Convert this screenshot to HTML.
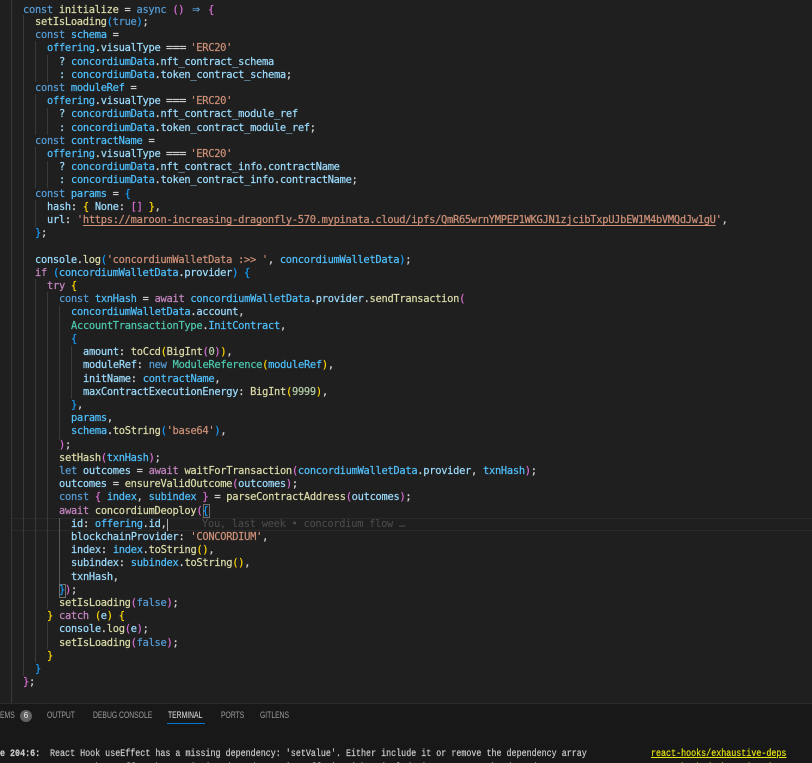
<!DOCTYPE html>
<html><head><meta charset="utf-8">
<style>
html,body{margin:0;padding:0;background:#1f1f1f;width:812px;height:763px;overflow:hidden}
#e{position:absolute;left:0;top:0;width:812px;height:703px;background:#1f1f1f;overflow:hidden}
.l{position:absolute;white-space:pre;font-family:"DejaVu Sans Mono","Liberation Mono",monospace;font-size:10.4px;line-height:13px;height:13px;color:#d4d4d4;letter-spacing:-0.286px;-webkit-text-stroke:.2px currentColor}
.g{position:absolute;width:1px;background:#3a3a3a}
.k{color:#569cd6}.c{color:#c586c0}.v{color:#4fc1ff}.f{color:#dcdcaa}.p{color:#9cdcfe}.s{color:#ce9178}.t{color:#4ec9b0}.n{color:#b5cea8}
.y{color:#ffd700}.m{color:#da70d6}.b{color:#179fff}.u{text-decoration:underline;text-underline-offset:2px}
.eq{display:inline-block;width:17.9px;transform:scaleX(1.12);transform-origin:left center;-webkit-text-stroke:.3px currentColor}
.ar{display:inline-block;width:11.95px;text-align:center;font-size:13px;letter-spacing:0;color:#569cd6}
#p{position:absolute;left:0;top:703px;width:812px;height:60px;background:#181818;border-top:1px solid #2b2b2b;box-sizing:border-box;overflow:hidden}
.tab{position:absolute;top:6px;font:9.5px/12px "Liberation Sans",sans-serif;color:#9d9d9d;white-space:pre;transform:scaleX(.715);transform-origin:left center}
.tm{position:absolute;white-space:pre;font-family:"Liberation Mono",monospace;font-size:10px;line-height:13px;color:#cccccc;transform:scaleX(.836);transform-origin:left top;-webkit-text-stroke:.2px currentColor}
</style></head><body>
<div id="e">
<div style="position:absolute;left:11px;top:518px;width:801px;height:13px;border-top:1px solid #2a2a2a;border-bottom:1px solid #2a2a2a;box-sizing:border-box"></div>
<div class="g" style="left:11px;top:0;height:703px"></div>
<div class="g" style="left:23px;top:15px;height:661px"></div>
<div class="g" style="left:35px;top:41px;height:41px"></div>
<div class="g" style="left:47px;top:55px;height:27px"></div>
<div class="g" style="left:35px;top:94px;height:41px"></div>
<div class="g" style="left:47px;top:108px;height:27px"></div>
<div class="g" style="left:35px;top:147px;height:41px"></div>
<div class="g" style="left:47px;top:161px;height:27px"></div>
<div class="g" style="left:35px;top:200px;height:27px"></div>
<div class="g" style="left:35px;top:279px;height:383px"></div>
<div class="g" style="left:47px;top:292px;height:317px"></div>
<div class="g" style="left:47px;top:622px;height:27px"></div>
<div class="g" style="left:59px;top:306px;height:134px"></div>
<div class="g" style="left:71px;top:346px;height:53px"></div>
<div class="g" style="left:59px;top:518px;height:67px;background:#5a5a5a"></div>
<div style="position:absolute;left:203px;top:504px;width:5px;height:12px;border:1px solid #707070"></div>
<div style="position:absolute;left:59px;top:584px;width:5px;height:12px;border:1px solid #707070"></div>
<div style="position:absolute;left:167px;top:519px;width:1px;height:12px;background:#aeafad"></div>

<div class="l" style="left:23px;top:3px"><span class="k">const</span> <span class="f">initialize</span> = <span class="k">async</span> <span class="m">()</span> <span class="ar">⇒</span> <span class="m">{</span></div>
<div class="l" style="left:35px;top:16px"><span class="f">setIsLoading</span><span class="b">(</span><span class="k">true</span><span class="b">)</span>;</div>
<div class="l" style="left:35px;top:29px"><span class="k">const</span> <span class="v">schema</span> =</div>
<div class="l" style="left:47px;top:42px"><span class="v">offering</span>.<span class="p">visualType</span> <span class="eq">===</span> <span class="s">'ERC20'</span></div>
<div class="l" style="left:59px;top:56px"><span class="p">?</span> <span class="v">concordiumData</span>.<span class="p">nft_contract_schema</span></div>
<div class="l" style="left:59px;top:69px"><span class="p">:</span> <span class="v">concordiumData</span>.<span class="p">token_contract_schema</span>;</div>
<div class="l" style="left:35px;top:82px"><span class="k">const</span> <span class="v">moduleRef</span> =</div>
<div class="l" style="left:47px;top:95px"><span class="v">offering</span>.<span class="p">visualType</span> <span class="eq">===</span> <span class="s">'ERC20'</span></div>
<div class="l" style="left:59px;top:108px"><span class="p">?</span> <span class="v">concordiumData</span>.<span class="p">nft_contract_module_ref</span></div>
<div class="l" style="left:59px;top:122px"><span class="p">:</span> <span class="v">concordiumData</span>.<span class="p">token_contract_module_ref</span>;</div>
<div class="l" style="left:35px;top:135px"><span class="k">const</span> <span class="v">contractName</span> =</div>
<div class="l" style="left:47px;top:148px"><span class="v">offering</span>.<span class="p">visualType</span> <span class="eq">===</span> <span class="s">'ERC20'</span></div>
<div class="l" style="left:59px;top:161px"><span class="p">?</span> <span class="v">concordiumData</span>.<span class="p">nft_contract_info</span>.<span class="p">contractName</span></div>
<div class="l" style="left:59px;top:174px"><span class="p">:</span> <span class="v">concordiumData</span>.<span class="p">token_contract_info</span>.<span class="p">contractName</span>;</div>
<div class="l" style="left:35px;top:188px"><span class="k">const</span> <span class="v">params</span> = <span class="b">{</span></div>
<div class="l" style="left:47px;top:201px"><span class="p">hash</span>: <span class="y">{</span> <span class="p">None</span>: <span class="m">[]</span> <span class="y">}</span>,</div>
<div class="l" style="left:47px;top:214px"><span class="p">url</span>: <span class="s">'<span class="u">https://maroon-increasing-dragonfly-570.mypinata.cloud/ipfs/QmR65wrnYMPEP1WKGJN1zjcibTxpUJbEW1M4bVMQdJw1gU</span>'</span>,</div>
<div class="l" style="left:35px;top:227px"><span class="b">}</span>;</div>

<div class="l" style="left:35px;top:254px"><span class="p">console</span>.<span class="f">log</span><span class="b">(</span><span class="s">'concordiumWalletData :&gt;&gt; '</span>, <span class="v">concordiumWalletData</span><span class="b">)</span>;</div>
<div class="l" style="left:35px;top:267px"><span class="c">if</span> <span class="b">(</span><span class="v">concordiumWalletData</span>.<span class="p">provider</span><span class="b">)</span> <span class="b">{</span></div>
<div class="l" style="left:47px;top:280px"><span class="c">try</span> <span class="y">{</span></div>
<div class="l" style="left:59px;top:293px"><span class="k">const</span> <span class="v">txnHash</span> = <span class="c">await</span> <span class="v">concordiumWalletData</span>.<span class="p">provider</span>.<span class="f">sendTransaction</span><span class="m">(</span></div>
<div class="l" style="left:71px;top:306px"><span class="v">concordiumWalletData</span>.<span class="p">account</span>,</div>
<div class="l" style="left:71px;top:320px"><span class="t">AccountTransactionType</span>.<span class="v">InitContract</span>,</div>
<div class="l" style="left:71px;top:333px"><span class="b">{</span></div>
<div class="l" style="left:83px;top:346px"><span class="p">amount</span>: <span class="f">toCcd</span><span class="y">(</span><span class="f">BigInt</span><span class="m">(</span><span class="n">0</span><span class="m">)</span><span class="y">)</span>,</div>
<div class="l" style="left:83px;top:359px"><span class="p">moduleRef</span>: <span class="k">new</span> <span class="t">ModuleReference</span><span class="y">(</span><span class="v">moduleRef</span><span class="y">)</span>,</div>
<div class="l" style="left:83px;top:373px"><span class="p">initName</span>: <span class="v">contractName</span>,</div>
<div class="l" style="left:83px;top:386px"><span class="p">maxContractExecutionEnergy</span>: <span class="f">BigInt</span><span class="y">(</span><span class="n">9999</span><span class="y">)</span>,</div>
<div class="l" style="left:71px;top:399px"><span class="b">}</span>,</div>
<div class="l" style="left:71px;top:412px"><span class="v">params</span>,</div>
<div class="l" style="left:71px;top:425px"><span class="v">schema</span>.<span class="f">toString</span><span class="b">(</span><span class="s">'base64'</span><span class="b">)</span>,</div>
<div class="l" style="left:59px;top:439px"><span class="m">)</span>;</div>
<div class="l" style="left:59px;top:452px"><span class="f">setHash</span><span class="m">(</span><span class="v">txnHash</span><span class="m">)</span>;</div>
<div class="l" style="left:59px;top:465px"><span class="k">let</span> <span class="p">outcomes</span> = <span class="c">await</span> <span class="f">waitForTransaction</span><span class="m">(</span><span class="v">concordiumWalletData</span>.<span class="p">provider</span>, <span class="v">txnHash</span><span class="m">)</span>;</div>
<div class="l" style="left:59px;top:478px"><span class="p">outcomes</span> = <span class="f">ensureValidOutcome</span><span class="m">(</span><span class="p">outcomes</span><span class="m">)</span>;</div>
<div class="l" style="left:59px;top:491px"><span class="k">const</span> <span class="m">{</span> <span class="v">index</span>, <span class="v">subindex</span> <span class="m">}</span> = <span class="f">parseContractAddress</span><span class="m">(</span><span class="p">outcomes</span><span class="m">)</span>;</div>
<div class="l" style="left:59px;top:505px"><span class="c">await</span> <span class="f">concordiumDeoploy</span><span class="m">(</span><span class="b">{</span></div>
<div class="l" style="left:71px;top:518px"><span class="p">id</span>: <span class="v">offering</span>.<span class="p">id</span>,</div>
<div class="l" style="left:202px;top:518px;color:#4d4d4d;-webkit-text-stroke:0">You, last week • concordium flow …</div>
<div class="l" style="left:71px;top:531px"><span class="p">blockchainProvider</span>: <span class="s">'CONCORDIUM'</span>,</div>
<div class="l" style="left:71px;top:544px"><span class="p">index</span>: <span class="v">index</span>.<span class="f">toString</span><span class="y">()</span>,</div>
<div class="l" style="left:71px;top:557px"><span class="p">subindex</span>: <span class="v">subindex</span>.<span class="f">toString</span><span class="y">()</span>,</div>
<div class="l" style="left:71px;top:571px"><span class="p">txnHash</span>,</div>
<div class="l" style="left:59px;top:584px"><span class="b">}</span><span class="m">)</span>;</div>
<div class="l" style="left:59px;top:597px"><span class="f">setIsLoading</span><span class="m">(</span><span class="k">false</span><span class="m">)</span>;</div>
<div class="l" style="left:47px;top:610px"><span class="y">}</span> <span class="c">catch</span> <span class="y">(</span><span class="p">e</span><span class="y">)</span> <span class="y">{</span></div>
<div class="l" style="left:59px;top:623px"><span class="p">console</span>.<span class="f">log</span><span class="m">(</span><span class="p">e</span><span class="m">)</span>;</div>
<div class="l" style="left:59px;top:637px"><span class="f">setIsLoading</span><span class="m">(</span><span class="k">false</span><span class="m">)</span>;</div>
<div class="l" style="left:47px;top:650px"><span class="y">}</span></div>
<div class="l" style="left:35px;top:663px"><span class="b">}</span></div>
<div class="l" style="left:23px;top:676px"><span class="m">}</span>;</div>
</div>

<div id="p">
<div class="tab" style="left:-23px">PROBLEMS</div>
<div style="position:absolute;left:20px;top:6px;width:12px;height:12px;border-radius:50%;background:#616161;color:#f0f0f0;font:8px/12px 'Liberation Sans',sans-serif;text-align:center">6</div>
<div class="tab" style="left:47px">OUTPUT</div>
<div class="tab" style="left:93px">DEBUG CONSOLE</div>
<div class="tab" style="left:168px;color:#e7e7e7">TERMINAL</div>
<div style="position:absolute;left:167px;top:19px;width:38px;height:1px;background:#0078d4"></div>
<div class="tab" style="left:221px">PORTS</div>
<div class="tab" style="left:260px">GITLENS</div>
<div class="tm" style="left:0;top:44px;font-weight:bold">e 204:6:</div>
<div class="tm" style="left:50px;top:44px">React Hook useEffect has a missing dependency: 'setValue'. Either include it or remove the dependency array</div>
<div class="tm" style="left:651px;top:44px;color:#e5e510;text-decoration:underline">react-hooks/exhaustive-deps</div>
<div class="tm" style="left:0;top:58px;font-weight:bold">e 253:6:</div>
<div class="tm" style="left:50px;top:58px">React Hook useEffect has a missing dependency: 'setOffer'. Either include it or remove the dependency array</div>
<div class="tm" style="left:651px;top:58px;color:#e5e510">react-hooks/exhaustive-deps</div>
</div>
</body></html>
